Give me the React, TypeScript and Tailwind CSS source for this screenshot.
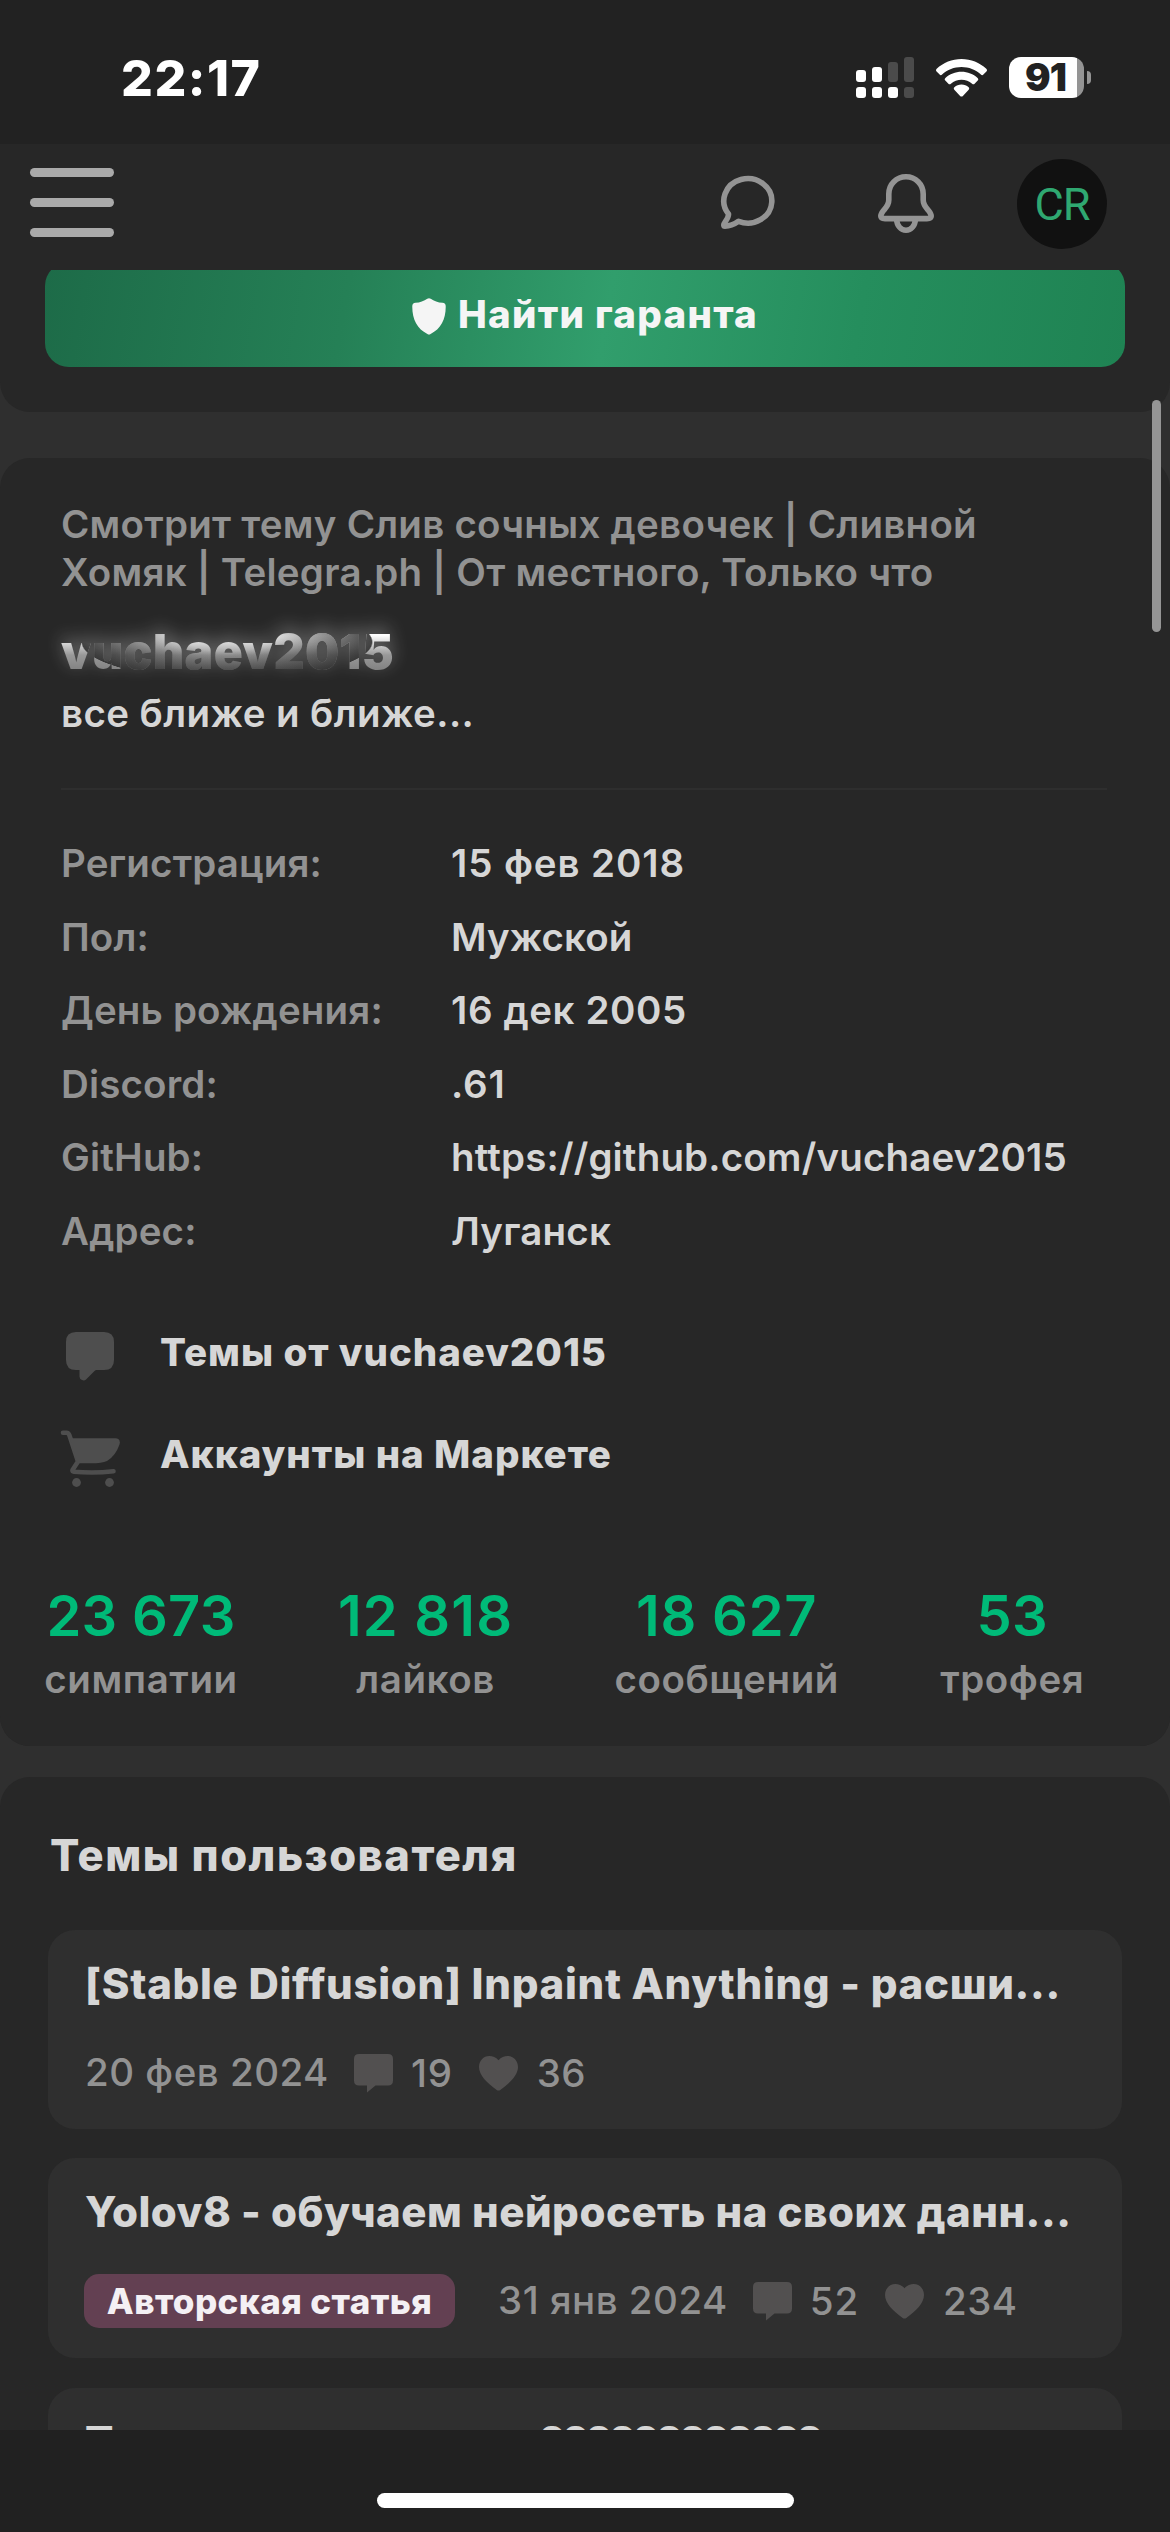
import type { ReactNode } from 'react';

const details = [
  { label: 'Регистрация:', value: '15 фев 2018', spacing: 'tracking-[0.9px]' },
  { label: 'Пол:', value: 'Мужской', spacing: 'tracking-[0.1px]' },
  { label: 'День рождения:', value: '16 дек 2005', spacing: 'tracking-[0.6px]' },
  { label: 'Discord:', value: '.61', spacing: 'tracking-[0.8px]' },
  { label: 'GitHub:', value: 'https://github.com/vuchaev2015', spacing: 'tracking-[0.15px]' },
  { label: 'Адрес:', value: 'Луганск', spacing: 'tracking-[0.2px]' },
];

const stats = [
  { value: '23 673', label: 'симпатии', width: 'w-[190px]', spacing: 'tracking-[0.3px]' },
  { value: '12 818', label: 'лайков', width: 'w-[172px]', spacing: 'tracking-[1.2px]' },
  { value: '18 627', label: 'сообщений', width: 'w-[223px]', spacing: 'tracking-[0.8px]' },
  { value: '53', label: 'трофея', width: 'w-[141px]', spacing: 'tracking-[0.4px]' },
];

const SignalIcon = () => (
  <svg width="58" height="41" viewBox="0 0 58 41" fill="#fff">
    <rect x="0" y="13" width="10" height="12" rx="3" />
    <rect x="16" y="10" width="10" height="15" rx="3" />
    <rect x="32" y="5" width="10" height="20" rx="3" fill="#4b4b4b" />
    <rect x="48" y="0" width="10" height="25" rx="3" fill="#4b4b4b" />
    <rect x="0" y="30" width="10" height="11" rx="3" />
    <rect x="16" y="30" width="10" height="11" rx="3" />
    <rect x="32" y="30" width="10" height="11" rx="3" />
    <rect x="48" y="30" width="10" height="11" rx="3" fill="#4b4b4b" />
  </svg>
);

const WifiIcon = () => (
  <svg width="51" height="38" viewBox="0 0 51 38" fill="#fff">
    <path d="M25.500 0C35 0 43.600 3.600 50.300 9.800C51.200 10.700 51.200 11.700 50.400 12.500L47.400 15.600C46.700 16.300 45.700 16.300 44.900 15.600C39.600 10.700 32.800 8 25.500 8S11.400 10.700 6.100 15.600C5.300 16.300 4.300 16.300 3.600 15.600L.6 12.500C-.2 11.700-.2 10.700.7 9.800C7.400 3.600 16 0 25.500 0Z" />
    <path d="M25.500 12.800C31.700 12.800 37.300 15.100 41.600 19C42.500 19.800 42.500 20.800 41.700 21.600L38.600 24.700C37.900 25.400 36.900 25.400 36.100 24.700C33.200 22.200 29.500 20.700 25.500 20.700S17.800 22.200 14.900 24.700C14.100 25.400 13.100 25.400 12.400 24.700L9.300 21.600C8.500 20.800 8.500 19.800 9.400 19C13.700 15.100 19.300 12.800 25.500 12.800Z" />
    <path d="M25.500 25.500C28.300 25.500 30.700 26.500 32.600 28.200C33.400 28.900 33.400 29.900 32.700 30.700L26.900 36.900C26.100 37.800 24.900 37.800 24.100 36.900L18.300 30.700C17.600 29.900 17.600 28.900 18.400 28.200C20.300 26.500 22.700 25.500 25.500 25.500Z" />
  </svg>
);

const ChatIcon = () => (
  <svg width="60" height="60" viewBox="0 0 60 60" fill="none" stroke="#949494" strokeWidth="5.600" strokeLinejoin="round">
    <path d="M10.500 41A24 22.200 0 1 1 20.500 48.300C16 51.500 11 53.200 7 53.200C5.500 53.200 5.500 51.500 6.500 50C9 46 10.800 44 10.500 41Z" />
  </svg>
);

const BellIcon = () => (
  <svg width="60" height="64" viewBox="0 0 60 64" fill="none" stroke="#949494" strokeWidth="5.600" strokeLinejoin="round">
    <path d="M30 4.800C20.500 4.800 12.800 12 12.800 22V28C12.800 33 10.500 35 7.500 38.500C5.500 41 4.800 42.500 4.800 44C4.800 46 6.500 46.600 9 46.600H51C53.500 46.600 55.200 46 55.200 44C55.200 42.500 54.500 41 52.500 38.500C49.500 35 47.200 33 47.200 28V22C47.200 12 39.500 4.800 30 4.800Z" />
    <path d="M20.500 47C21 54 25 58.300 30 58.300S39 54 39.500 47" />
  </svg>
);

const ShieldIcon = () => (
  <svg width="34" height="37" viewBox="0 0 34 37" fill="#f5f5f5">
    <path d="M15.300.7Q17-.3 18.700.7C22 3 26 4.500 30.500 4.800Q33.700 5 33.700 8C34 21 29 31 18.600 36Q17 37 15.400 36C5 31 0 21 .3 8Q.3 5 3.500 4.800C8 4.500 12 3 15.300.7Z" />
  </svg>
);

const ThreadIcon = () => (
  <svg width="48" height="49" viewBox="0 0 48 49" fill="#4e4e4e">
    <path d="M10 0H38Q48 0 48 10V28Q48 38 38 38H30.500Q29.500 38 28.500 39L20 47.500Q18.500 49 16 48Q13.500 47 13.500 44.500V38H10Q0 38 0 28V10Q0 0 10 0Z" />
  </svg>
);

const CartIcon = () => (
  <svg width="60" height="57" viewBox="0 0 60 57" fill="#4e4e4e">
    <path d="M3 2.700H6.500Q8.500 2.700 9.300 5L18 31.500L12.500 40Q12 41.500 14 41.700Q34 43.500 53.500 41.200" fill="none" stroke="#4e4e4e" strokeWidth="4.600" strokeLinecap="round" strokeLinejoin="round" />
    <path d="M10 8.300H55Q61 8.500 59.500 14.500Q55.500 26 47 31Q42 33.300 31 33.300H17.500Z" />
    <circle cx="16.500" cy="52.500" r="4.400" />
    <circle cx="49.500" cy="52.500" r="4.400" />
  </svg>
);

const CommentIcon = () => (
  <svg width="39" height="39" viewBox="0 0 39 39" fill="#525050">
    <path d="M5 0H34Q39 0 39 5V26.500Q39 31.500 34 31.500H21.500L13 38.500V31.500H5Q0 31.500 0 26.500V5Q0 0 5 0Z" />
  </svg>
);

const HeartIcon = () => (
  <svg width="39" height="35" viewBox="0 0 39 35" fill="#525050">
    <path d="M19.500 4.200C22 1.200 25.500 0 28.700 0C34.500 0 39 4.800 39 11C39 19 31 27 21.300 34Q19.500 35.200 17.700 34C8 27 0 19 0 11C0 4.800 4.500 0 10.300 0C13.500 0 17 1.200 19.500 4.200Z" />
  </svg>
);

const Header = () => (
  <header className="flex h-[126px] shrink-0 items-start bg-[#272727]">
    <button className="mt-6 ml-[30px] flex w-[84px] flex-col gap-[21px]">
      <span className="h-[9px] w-full rounded-full bg-[#aaaaaa]" />
      <span className="h-[9px] w-full rounded-full bg-[#aaaaaa]" />
      <span className="h-[9px] w-full rounded-full bg-[#aaaaaa]" />
    </button>
    <div className="mt-[29px] ml-[604px]"><ChatIcon /></div>
    <div className="mt-[28px] ml-[98px]"><BellIcon /></div>
    <div className="mt-[15px] ml-[81px] flex size-[90px] items-center justify-center rounded-full bg-[#111111] pt-[2px] font-[Roboto] text-[45px] tracking-[-1px] text-[#2fa871]">
      CR
    </div>
  </header>
);

const ProfileLink = ({ icon, children }: { icon: ReactNode; children: ReactNode }) => (
  <a className="flex h-[102px] items-center text-[38.5px] font-extrabold tracking-[0.95px] text-[#d6d6d6]">
    <span className="flex w-[60px] shrink-0 justify-center pt-[8px]">{icon}</span>
    <span className="ml-[40px]">{children}</span>
  </a>
);

type ThreadProps = { title: string; titleClass: string; tag?: string; date: string; comments: number; likes: number };

const Thread = ({ title, titleClass, tag, date, comments, likes }: ThreadProps) => (
  <article className={`rounded-[27px] bg-[#2f2f2f] pt-[29px] pl-[37px] ${tag ? 'mb-[30px] h-[200px]' : 'mb-[29px] h-[199px]'}`}>
    <h3 className={`h-[50px] text-[42px] leading-[50px] font-extrabold whitespace-nowrap text-[#d6d6d6] ${titleClass}`}>{title}</h3>
    <div className="mt-[37px] flex h-[54px] items-center text-[38.5px] font-medium text-[#929292]">
      {tag && (
        <span className="mr-[43px] -ml-px flex h-[54px] w-[371px] items-center justify-center rounded-[15px] bg-[#634052] text-[35px] font-extrabold tracking-[0.4px] text-[#f4f0f4]">
          {tag}
        </span>
      )}
      <span className="tracking-[0.5px] whitespace-nowrap">{date}</span>
      <span className="ml-[25px]"><CommentIcon /></span>
      <span className="ml-[18px] pt-[2px] tracking-[0.8px]">{comments}</span>
      <span className="ml-[26px]"><HeartIcon /></span>
      <span className="ml-[19px] pt-[2px] tracking-[0.5px]">{likes}</span>
    </div>
  </article>
);

const App = () => {
  return (
    <div className="relative flex h-[2532px] w-[1170px] flex-col overflow-hidden bg-[#2f2f2f] font-[Inter,sans-serif]">
      {/* iOS status bar */}
      <div className="flex h-[144px] shrink-0 items-start bg-[#222222] text-white">
        <div className="mt-[48px] ml-[121px] w-[140px] text-[50px] leading-[60px] font-extrabold tracking-[1.5px]">22:17</div>
        <div className="mt-[57px] ml-[595px]"><SignalIcon /></div>
        <div className="mt-[59px] ml-[22px]"><WifiIcon /></div>
        <div className="mt-[57px] ml-[22px] flex items-center gap-[3px]">
          <div className="flex h-[41px] w-[75px] items-center justify-center rounded-[12px] bg-linear-to-r from-white from-[91%] to-[#949494] to-[91%] pr-[2px] text-[38px] font-black tracking-[-1px] text-[#222222]">
            91
          </div>
          <div className="h-[13px] w-[4px] rounded-r-full bg-[#949494]" />
        </div>
      </div>

      <Header />

      <main className="h-[2160px] shrink-0 overflow-hidden">
        <section className="flex h-[142px] items-start rounded-b-[30px] bg-[#272727] px-[45px]">
          <button className="-mt-[8px] flex h-[105px] w-full items-center rounded-[24px] bg-[linear-gradient(100deg,#1d6b48_0%,#258056_28%,#319e6c_52%,#258e5d_75%,#1f8353_100%)] pl-[367px] text-[38.5px] font-extrabold tracking-[1.3px] text-[#f5f5f5]">
            <span className="mt-[3px]"><ShieldIcon /></span>
            <span className="ml-[12px]">Найти гаранта</span>
          </button>
        </section>

        <section className="mt-[46px] h-[1288px] rounded-[30px] bg-[#272727]">
          <div className="h-[1082px] px-[61px] pt-[42px] text-[38.5px] font-[560]">
            <p className="leading-[48px] tracking-[0.25px] whitespace-nowrap text-[#929292]">
              Смотрит тему Слив сочных девочек | Сливной<br />
              Хомяк | Telegra.ph | От местного, Только что
            </p>
            {/* username with a light top edge and a dark oval fading over the middle letters */}
            <h1 className="mt-[26px] w-[340px] bg-[radial-gradient(ellipse_146px_38px_at_166px_20px,transparent_25%,#2b2b2bdd_99%,transparent_100%),linear-gradient(to_bottom,#ffffff_22%,#999999_55%,#808080_82%)] bg-clip-text text-[48px] leading-[60px] font-black tracking-[0.5px] text-transparent drop-shadow-[0_-5px_9px_rgba(255,255,255,0.35)]">
              vuchaev2015
            </h1>
            <p className="mt-[7px] leading-[48px] tracking-[0.4px] text-[#d6d6d6]">все ближе и ближе...</p>
            <div className="mt-[51px] mr-[2px] h-[2px] bg-[#2e2e2e]" />
            <dl className="mt-[37px]">
              {details.map((row) => (
                <div key={row.label} className="flex h-[73.6px] items-center">
                  <dt className="w-[390px] tracking-[0.15px] text-[#929292]">{row.label}</dt>
                  <dd className={`whitespace-nowrap text-[#d6d6d6] ${row.spacing}`}>{row.value}</dd>
                </div>
              ))}
            </dl>
            <nav className="-ml-px pt-[33px]">
              <ProfileLink icon={<ThreadIcon />}>Темы от vuchaev2015</ProfileLink>
              <ProfileLink icon={<CartIcon />}>Аккаунты на Маркете</ProfileLink>
            </nav>
          </div>
          <div className="flex h-[206px] gap-[103.6px] rounded-b-[30px] bg-[#282828] pt-[46px] pl-[46px]">
            {stats.map((stat) => (
              <div key={stat.label} className={`flex flex-col items-center ${stat.width}`}>
                <span className={`text-[56px] leading-[60px] font-[560] whitespace-nowrap text-[#00ba78] ${stat.spacing}`}>{stat.value}</span>
                <span className="mt-[9px] text-[38.5px] leading-[48px] font-[560] tracking-[0.6px] whitespace-nowrap text-[#929292]">{stat.label}</span>
              </div>
            ))}
          </div>
        </section>

        <section className="mt-[31px] h-[700px] rounded-t-[30px] bg-[#272727] px-[48px] pt-[48px]">
          <h2 className="ml-[2px] mb-[45px] text-[43.5px] leading-[60px] font-extrabold tracking-[1.5px] text-[#d6d6d6]">Темы пользователя</h2>
          <Thread title="[Stable Diffusion] Inpaint Anything - расши..." titleClass="tracking-[0.7px]" date="20 фев 2024" comments={19} likes={36} />
          <Thread title="Yolov8 - обучаем нейросеть на своих данн..." titleClass="tracking-[0.5px]" tag="Авторская статья" date="31 янв 2024" comments={52} likes={234} />
          <Thread title="Так можно ли узнать ????????????" titleClass="tracking-[-0.9px] [word-spacing:3px]" date="30 янв 2024" comments={14} likes={28} />
        </section>
      </main>

      <footer className="flex h-[102px] shrink-0 items-start justify-center bg-[#212121] pt-[63px]">
        <div className="h-[15px] w-[417px] rounded-full bg-white" />
      </footer>

      {/* page scroll indicator floating over the content */}
      <div className="absolute top-[400px] left-[1152px] h-[232px] w-[9px] rounded-full bg-[#959595]" />
    </div>
  );
};

export default App;
